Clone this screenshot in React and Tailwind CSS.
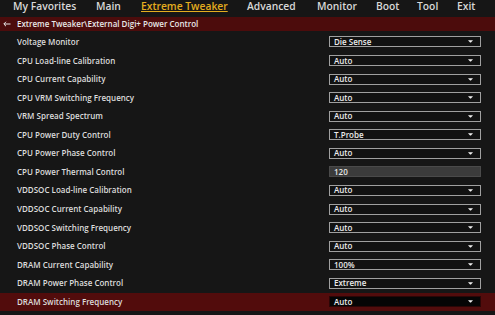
import React from 'react';

const tabs = [
  { label: 'My Favorites', x: 'w-[83px]' },
  { label: 'Main', x: 'w-[45px]' },
  { label: 'Extreme Tweaker', x: 'w-[106px]', active: true },
  { label: 'Advanced', x: 'w-[70px]' },
  { label: 'Monitor', x: 'w-[59px]' },
  { label: 'Boot', x: 'w-[41px]' },
  { label: 'Tool', x: 'w-[40px]' },
  { label: 'Exit', x: 'w-[30px]' },
];

const rows = [
  { label: 'Voltage Monitor', value: 'Die Sense' },
  { label: 'CPU Load-line Calibration', value: 'Auto' },
  { label: 'CPU Current Capability', value: 'Auto' },
  { label: 'CPU VRM Switching Frequency', value: 'Auto' },
  { label: 'VRM Spread Spectrum', value: 'Auto' },
  { label: 'CPU Power Duty Control', value: 'T.Probe' },
  { label: 'CPU Power Phase Control', value: 'Auto' },
  { label: 'CPU Power Thermal Control', value: '120', input: true },
  { label: 'VDDSOC Load-line Calibration', value: 'Auto' },
  { label: 'VDDSOC Current Capability', value: 'Auto' },
  { label: 'VDDSOC Switching Frequency', value: 'Auto' },
  { label: 'VDDSOC Phase Control', value: 'Auto' },
  { label: 'DRAM Current Capability', value: '100%' },
  { label: 'DRAM Power Phase Control', value: 'Extreme' },
  { label: 'DRAM Switching Frequency', value: 'Auto', selected: true },
];

const Arrow = () => (
  <svg width="5" height="3" viewBox="0 0 5 3" className="mr-[7px]">
    <path d="M0 0.3 H5 L2.9 2.6 H2.1 Z" fill="#f2f2f2" />
  </svg>
);

const Field = ({ value, input, selected }) => {
  if (input) {
    return (
      <div className="w-[152px] h-[11px] flex items-center pl-[4px] bg-[#3b3b3b] border border-[#4a4a4a] text-[#e6e6e6]">
        {value}
      </div>
    );
  }
  return (
    <div
      className={`w-[152px] h-[11px] flex items-center justify-between pl-[4px] ${
        selected ? 'bg-[#050505] border border-[#2a0606]' : 'bg-[#121212] border border-[#a0a0a0]'
      } text-[#ececec]`}
    >
      <span>{value}</span>
      <Arrow />
    </div>
  );
};

export default function App() {
  return (
    <div
      className="w-[495px] h-[315px] bg-[#161616] overflow-hidden font-semibold"
      style={{ fontFamily: '"Open Sans", "Noto Sans", sans-serif' }}
    >
      <div className="h-[17px] flex items-start pl-[13px] text-[10.3px] leading-[13px] text-[#d8d8d8]">
        {tabs.map((t) => (
          <div key={t.label} className={`${t.x} shrink-0`}>
            <span className={t.active ? 'text-[#e4ad1f] underline decoration-1 underline-offset-[1px]' : ''}>
              {t.label}
            </span>
          </div>
        ))}
      </div>
      <div className="h-[14px] bg-[#4c0c0c] flex items-center pl-[3px] gap-[6px] text-[8px] text-[#e8e8e8]">
        <svg width="8" height="6" viewBox="0 0 8 6">
          <path d="M7.5 3 H1 M3 0.8 L0.8 3 L3 5.2" stroke="#e8e8e8" strokeWidth="1" fill="none" />
        </svg>
        <span>Extreme Tweaker\External Digi+ Power Control</span>
      </div>
      <div className="mt-[1.7px] flex flex-col">
        {rows.map((r) => (
          <div
            key={r.label}
            className={`h-[18.57px] flex items-center text-[8px] ${
              r.selected ? 'bg-[#520c0c]' : ''
            }`}
          >
            <div className="w-[329px] pl-[17px] text-[#dcdcdc]">{r.label}</div>
            <Field {...r} />
          </div>
        ))}
      </div>
    </div>
  );
}
